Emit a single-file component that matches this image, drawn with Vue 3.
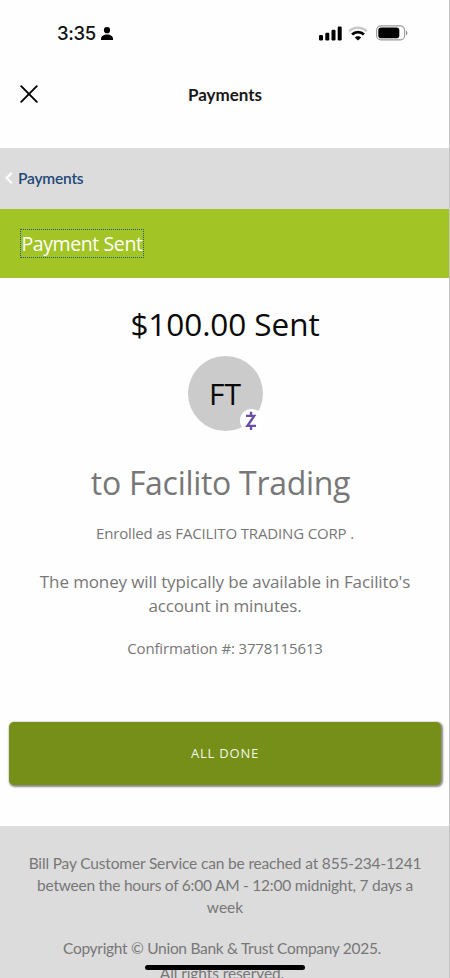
<script setup>
const serviceLines = [
  { id: 's1', text: 'Bill Pay Customer Service can be reached at 855-234-1241' },
  { id: 's2', text: 'between the hours of 6:00 AM - 12:00 midnight, 7 days a' },
  { id: 's3', text: 'week' },
]
</script>

<template>
  <div class="screen">
    <header class="status">
      <div class="clock">
        <span class="time">3:35</span>
        <svg class="person" width="12" height="13" viewBox="0 0 12 13">
          <circle cx="6" cy="3.2" r="3.1" />
          <path d="M0 13V11.8C0 9 2.6 7.4 6 7.4S12 9 12 11.8V13Z" />
        </svg>
      </div>
      <div class="indicators">
        <svg width="23" height="15" viewBox="0 0 23 15">
          <rect x="0" y="9" width="4" height="5.5" rx="1.2" />
          <rect x="6.3" y="6.7" width="4" height="7.8" rx="1.2" />
          <rect x="12.5" y="3.8" width="4" height="10.7" rx="1.2" />
          <rect x="18.7" y="0.5" width="4" height="14" rx="1.2" />
        </svg>
        <svg class="wifi" width="20" height="15" viewBox="0 0 20 15" fill="none">
          <path d="M1.2 5.2C6 .6 14 .6 18.8 5.2" stroke="#c9c9c9" stroke-width="2.5" />
          <path d="M4.1 8.6C7.3 5.4 12.7 5.4 15.9 8.6" stroke="#000" stroke-width="2.8" />
          <path d="M6.8 11.4C8.5 9.7 11.5 9.7 13.2 11.4L10 14.4Z" fill="#000" />
        </svg>
        <svg class="battery" width="32" height="16" viewBox="0 0 32 16" fill="none">
          <rect x=".6" y=".9" width="28" height="14" rx="4.4" stroke="#999" stroke-width="1.1" />
          <rect x="2.3" y="2.6" width="21" height="10.6" rx="2.8" fill="#000" />
          <path d="M30 5.5C31.8 6.2 31.8 9.6 30 10.3Z" fill="#888" />
        </svg>
      </div>
    </header>

    <nav class="topbar">
      <svg class="close" width="18" height="18" viewBox="0 0 18 18">
        <path d="M1.2 1.2L16.8 16.8M16.8 1.2L1.2 16.8" fill="none" stroke="#000" stroke-width="1.9" stroke-linecap="round" />
      </svg>
      <h1><span>Payments</span></h1>
    </nav>

    <div class="crumb">
      <svg width="9" height="12" viewBox="0 0 9 12">
        <path d="M7.8 .8L2.6 6L7.8 11.2" fill="none" stroke="#fff" stroke-width="2.2" />
      </svg>
      <a>Payments</a>
    </div>

    <div class="banner"><span class="sent">Payment Sent</span></div>

    <main>
      <p class="amount"><span>$100.00 Sent</span></p>
      <div class="avatar">
        <span>FT</span>
        <div class="badge">
          <svg width="12" height="20" viewBox="0 0 12 20" fill="none" stroke="#6a4fa6" stroke-width="2.4">
            <path d="M1 4.9H9.2L2.4 14.9H11" />
            <path d="M6 .8V4.5M6 15V19" />
          </svg>
        </div>
      </div>
      <p class="payee"><span>to Facilito Trading</span></p>
      <p class="enrolled"><span>Enrolled as FACILITO TRADING CORP .</span></p>
      <p class="note n1"><span>The money will typically be available in Facilito's</span></p>
      <p class="note n2"><span>account in minutes.</span></p>
      <p class="confirm"><span>Confirmation #: 3778115613</span></p>
      <button class="done"><span>ALL DONE</span></button>
    </main>

    <footer>
      <p v-for="l in serviceLines" :key="l.id" :class="l.id"><span>{{ l.text }}</span></p>
      <p class="copy"><span>Copyright © Union Bank &amp; Trust Company 2025.</span></p>
      <p class="rights"><span>All rights reserved.</span></p>
    </footer>
    <div class="home"></div>
  </div>
</template>

<style>
body {
  background: #fff;
  overflow: hidden;
}
</style>

<style scoped>
.screen {
  position: relative;
  box-sizing: border-box;
  width: 450px;
  height: 978px;
  overflow: hidden;
  display: flex;
  flex-direction: column;
  background: #fefefe;
  font-family: 'Open Sans', sans-serif;
  color: #777;
}
.screen::after {
  content: '';
  position: absolute;
  top: 0;
  right: 0;
  width: 1px;
  height: 100%;
  background: #c4c4c4;
}
p, h1 { margin: 0; white-space: nowrap; text-align: center; }
.status {
  flex: none;
  height: 66px;
  display: flex;
  justify-content: space-between;
  align-items: center;
  padding: 0 42px 0 57px;
  box-sizing: border-box;
}
.clock { display: flex; align-items: center; gap: 5px; }
.time {
  font: 500 18.5px/22px Inter, sans-serif;
  letter-spacing: -.35px;
  color: #111;
}
.indicators { display: flex; align-items: center; }
.wifi { margin-left: 6px; }
.battery { margin-left: 8px; }
.topbar {
  flex: none;
  height: 82px;
  display: grid;
  grid-template-columns: 60px 1fr 60px;
  align-items: start;
}
.close { margin: 18.5px 0 0 20px; }
h1 {
  padding-top: 17px;
  font: 700 17px/24px Lato, sans-serif;
  color: #181818;
}
.crumb {
  flex: none;
  height: 61px;
  display: flex;
  align-items: center;
  gap: 5px;
  padding: 0 0 1px 4px;
  box-sizing: border-box;
  background: #dcdcdc;
}
.crumb a {
  font: 600 15.5px/20px Lato, sans-serif;
  letter-spacing: -.2px;
  color: #1d4877;
}
.banner {
  flex: none;
  height: 69px;
  display: flex;
  align-items: center;
  padding-left: 20px;
  box-sizing: border-box;
  background: #a2c424;
}
.sent {
  box-sizing: border-box;
  width: 124px;
  height: 29px;
  border: 1px dotted #28577e;
  font-size: 19.5px;
  line-height: 28px;
  letter-spacing: -.4px;
  text-align: center;
  white-space: nowrap;
  color: #fff;
}
main {
  flex: none;
  height: 548px;
  display: flex;
  flex-direction: column;
  align-items: center;
}
.amount {
  margin-top: 25px;
  font-size: 31.5px;
  line-height: 42px;
  letter-spacing: -.07px;
  color: #0a0a0a;
}
.avatar {
  position: relative;
  margin-top: 11px;
  width: 75px;
  height: 75px;
  border-radius: 50%;
  background: #cbcbcb;
  color: #0a0a0a;
  font-size: 30px;
  line-height: 76px;
  text-align: center;
}
.badge {
  position: absolute;
  right: 0;
  bottom: -1px;
  width: 23px;
  height: 23px;
  border-radius: 50%;
  background: #fff;
  display: flex;
  align-items: center;
  justify-content: center;
}
.payee {
  margin-top: 30px;
  padding-right: 9px;
  font-size: 32px;
  line-height: 44px;
  letter-spacing: -.29px;
}
.enrolled {
  margin-top: 17px;
  font-size: 15px;
  line-height: 22px;
  letter-spacing: -.15px;
}
.note { font-size: 17px; line-height: 24px; letter-spacing: -.12px; }
.n1 { margin-top: 26px; }
.confirm {
  margin-top: 19px;
  font-size: 15px;
  line-height: 22px;
  letter-spacing: -.15px;
}
.done {
  margin: 63px 0 0 0;
  width: 432px;
  height: 63px;
  border: 0;
  padding: 0 0 1px 0;
  border-radius: 5px;
  background: #758f19;
  box-shadow: 1px 1px 2px 1px #888;
  color: #f4f7e4;
  font: 400 13px/20px 'Open Sans', sans-serif;
  letter-spacing: .8px;
}
footer {
  flex: none;
  height: 152px;
  box-sizing: border-box;
  padding-top: 26px;
  background: #dcdcdc;
  font-family: Lato, sans-serif;
  font-size: 15.5px;
  line-height: 22px;
}
.s1 { letter-spacing: -.16px; }
.s2 { letter-spacing: -.24px; }
.copy { margin-top: 19px; padding-right: 6px; letter-spacing: -.3px; }
.rights { margin-top: 3px; padding-right: 6px; letter-spacing: -.1px; }
.home {
  position: absolute;
  left: 145px;
  top: 965px;
  width: 160px;
  height: 5px;
  border-radius: 3px;
  background: #000;
}
</style>
